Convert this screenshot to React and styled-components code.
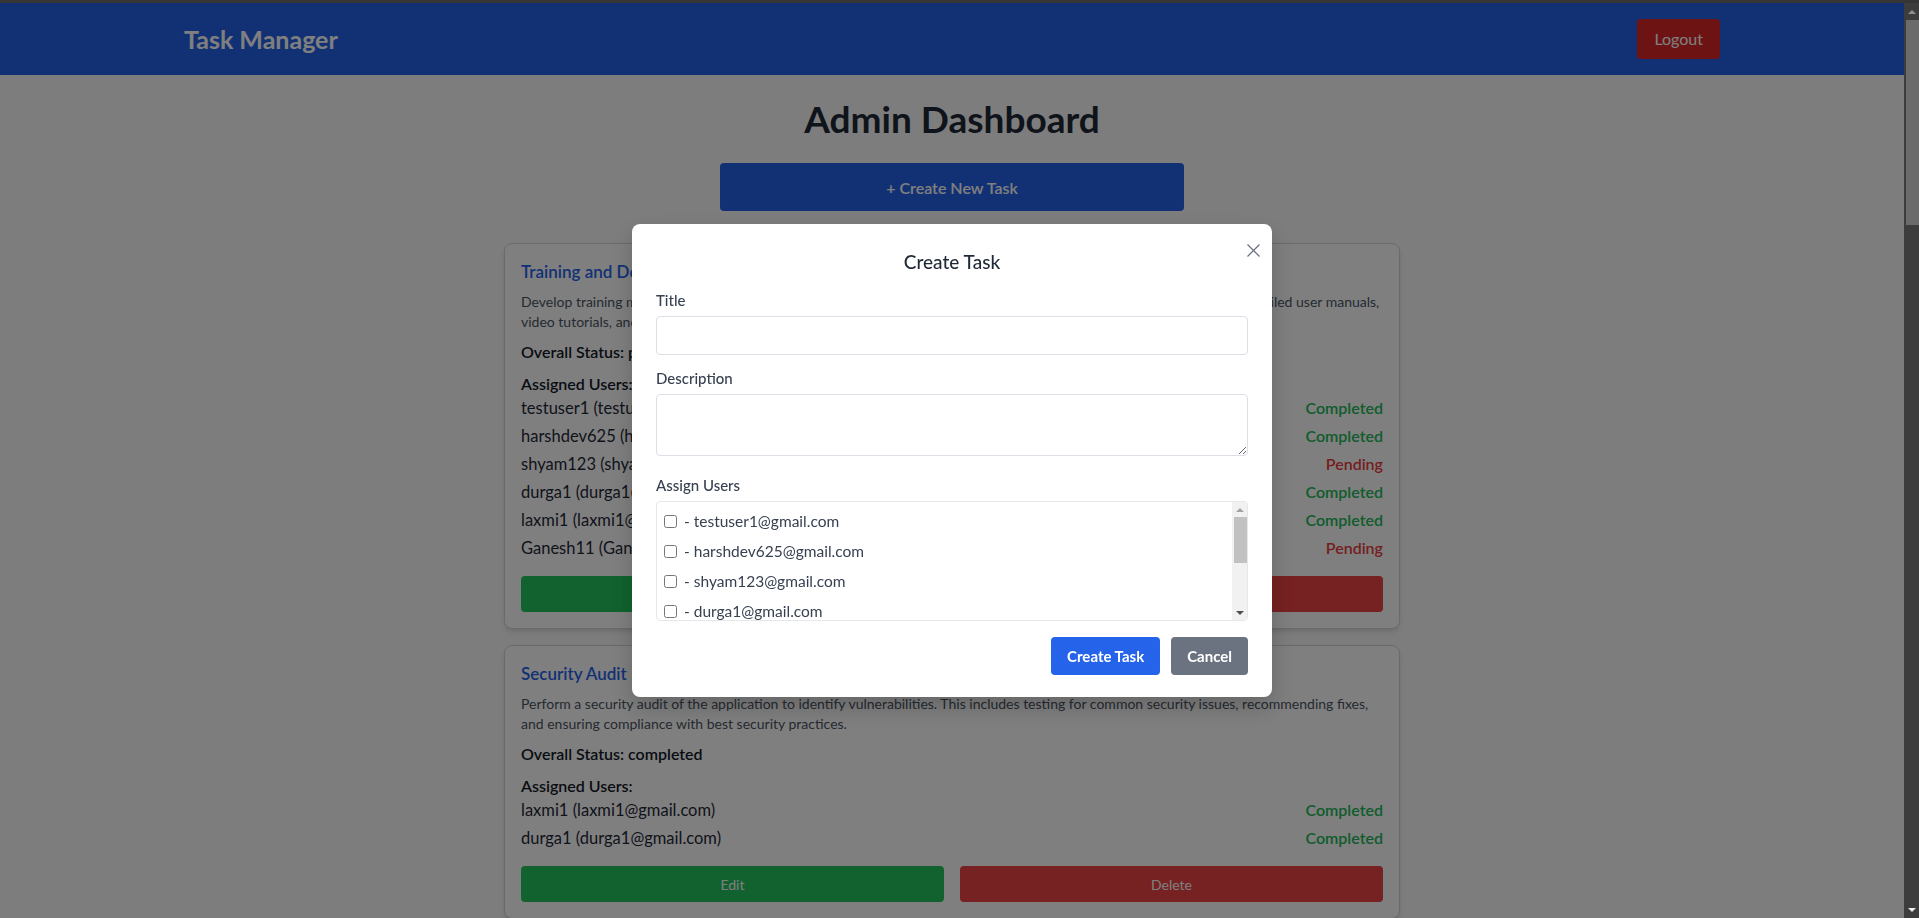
import React, { useState } from "react";
import styled, { createGlobalStyle } from "styled-components";

const GlobalStyle = createGlobalStyle`
  html {
    border-top: 3px solid #363636;
  }
  body {
    margin: 0;
    background: #fafafa;
    font-family: "Lato", "Noto Sans", sans-serif;
    color: #1f2937;
  }
`;

const Page = styled.div`
  margin-right: 15px;
`;

const Navbar = styled.header`
  background: #2563eb;
  padding: 16px 0;
`;

const NavInner = styled.div`
  max-width: 1536px;
  margin: 0 auto;
  display: flex;
  align-items: center;
  justify-content: space-between;
`;

const Brand = styled.h1`
  margin: 0;
  font-size: 25px;
  line-height: 32px;
  font-weight: 700;
  color: #fff;
`;

const LogoutButton = styled.button`
  background: #dc2626;
  color: #fff;
  border: none;
  border-radius: 4px;
  padding: 8px 17px;
  font: inherit;
  font-size: 16px;
  line-height: 24px;
  cursor: pointer;
`;

const Main = styled.main`
  padding: 24px 0;
  display: flex;
  flex-direction: column;
  align-items: center;
`;

const Title = styled.h2`
  margin: 0 0 24px;
  font-size: 37px;
  line-height: 40px;
  font-weight: 700;
  color: #1f2937;
`;

const CreateButton = styled.button`
  width: 464px;
  height: 48px;
  margin-bottom: 32px;
  background: #2563eb;
  color: #fff;
  border: none;
  border-radius: 4px;
  font: inherit;
  font-size: 16px;
  font-weight: 600;
  cursor: pointer;
`;

const TaskList = styled.div`
  width: 100%;
  max-width: 896px;
  display: flex;
  flex-direction: column;
  gap: 16px;
`;

const Card = styled.div`
  background: #fff;
  border: 1px solid #d1d5db;
  border-radius: 8px;
  padding: 16px;
  box-shadow: 0 4px 6px -1px rgba(0, 0, 0, 0.1), 0 2px 4px -2px rgba(0, 0, 0, 0.1);
`;

const CardTitle = styled.h3`
  margin: 0;
  font-size: 17px;
  line-height: 24px;
  font-weight: 600;
  color: #2563eb;
`;

const CardDesc = styled.p`
  margin: 8px 0 0;
  font-size: 14px;
  line-height: 20px;
  color: #4b5563;
`;

const StrongLine = styled.p`
  margin: 8px 0 0;
  font-size: 16px;
  line-height: 24px;
  font-weight: 600;
  color: #111827;
`;

const UserList = styled.ul`
  list-style: none;
  margin: 0;
  padding: 0;
  display: flex;
  flex-direction: column;
  gap: 4px;
`;

const UserRow = styled.li`
  display: flex;
  justify-content: space-between;
  font-size: 16.5px;
  line-height: 24px;
  color: #1f2937;
`;

const Status = styled.span`
  font-weight: 600;
  font-size: 16px;
  color: ${(p) => (p.$done ? "#21b85a" : "#ea3c3c")};
`;

const CardActions = styled.div`
  display: flex;
  gap: 16px;
  margin-top: 16px;
`;

const CardButton = styled.button`
  flex: 1;
  height: 36px;
  border: none;
  border-radius: 4px;
  background: ${(p) => (p.$danger ? "#ef4444" : "#22c55e")};
  color: #fff;
  font: inherit;
  font-size: 14px;
  cursor: pointer;
`;

/* classic scrollbar look, drawn because the page shows it */
const Scrollbar = styled.div`
  width: 15px;
  display: flex;
  flex-direction: column;
  background: ${(p) => (p.$dark ? "#3d3d3d" : "#f1f1f1")};
`;

const PageScrollbar = styled(Scrollbar)`
  position: fixed;
  top: 3px;
  right: 0;
  bottom: 0;
  z-index: 2;
`;

const ScrollButton = styled.div`
  height: ${(p) => p.$h}px;
  flex-shrink: 0;
  display: flex;
  align-items: center;
  justify-content: center;

  &::before {
    content: "";
    border-left: 4px solid transparent;
    border-right: 4px solid transparent;
    ${(p) => (p.$down ? "border-top" : "border-bottom")}: 4px solid ${(p) => p.$color};
  }
`;

const ScrollTrack = styled.div`
  flex: 1;
`;

const ScrollThumb = styled.div`
  height: ${(p) => p.$size}px;
  margin-left: 2px;
  background: ${(p) => (p.$dark ? "#6b6b6b" : "#c1c1c1")};
`;

const Overlay = styled.div`
  position: fixed;
  top: 3px;
  left: 0;
  right: 15px;
  bottom: 0;
  background: rgba(0, 0, 0, 0.5);
  display: flex;
  align-items: center;
  justify-content: center;
`;

const Modal = styled.div`
  position: relative;
  width: 640px;
  box-sizing: border-box;
  background: #fff;
  border-radius: 8px;
  padding: 24px 24px 22px;
  box-shadow: 0 10px 25px rgba(0, 0, 0, 0.2);
`;

const CloseButton = styled.button`
  position: absolute;
  top: 20px;
  right: 12px;
  width: 13px;
  height: 13px;
  padding: 0;
  border: none;
  background: none;
  cursor: pointer;
  display: flex;
`;

const ModalTitle = styled.h2`
  margin: 0 0 12px;
  text-align: center;
  font-size: 19px;
  line-height: 28px;
  font-weight: 500;
  color: #1f2937;
`;

const Field = styled.div`
  margin-bottom: ${(p) => p.$mb}px;
`;

const Label = styled.label`
  display: block;
  margin-bottom: 4px;
  font-size: 15px;
  line-height: 24px;
  font-weight: 500;
  color: #374151;
`;

const TextInput = styled.input`
  display: block;
  width: 100%;
  height: 39px;
  box-sizing: border-box;
  border: 1px solid #dcdfe6;
  border-radius: 4px;
  padding: 8px 12px;
  font: inherit;
  font-size: 14px;
`;

const TextArea = styled.textarea`
  display: block;
  width: 100%;
  height: 62px;
  box-sizing: border-box;
  border: 1px solid #dcdfe6;
  border-radius: 4px;
  padding: 8px 12px;
  font: inherit;
  font-size: 14px;
`;

const UserPicker = styled.div`
  height: 120px;
  box-sizing: border-box;
  border: 1px solid #e5e7eb;
  border-radius: 4px;
  display: flex;
  overflow: hidden;
`;

const PickList = styled.div`
  flex: 1;
  padding: 9px 7px 0;
  overflow: hidden;
`;

const PickRow = styled.label`
  display: flex;
  align-items: center;
  height: 20px;
  margin-bottom: 10px;
  font-size: 15.5px;
  color: #374151;
`;

const Check = styled.input`
  width: 13px;
  height: 13px;
  margin: 0 7px 0 0;
`;

const ModalActions = styled.div`
  display: flex;
  justify-content: flex-end;
  gap: 11px;
  margin-top: 16px;
`;

const ModalButton = styled.button`
  height: 38px;
  padding: 0 16px;
  border: none;
  border-radius: 4px;
  background: ${(p) => (p.$secondary ? "#6b7280" : "#2563eb")};
  color: #fff;
  font: inherit;
  font-size: 15px;
  font-weight: 700;
  cursor: pointer;
`;

const people = [
  ["testuser1", "testuser1@gmail.com"],
  ["harshdev625", "harshdev625@gmail.com"],
  ["shyam123", "shyam123@gmail.com"],
  ["durga1", "durga1@gmail.com"],
  ["laxmi1", "laxmi1@gmail.com"],
  ["Ganesh11", "Ganesh11@gmail.com"],
];

const tasks = [
  {
    title: "Training and Documentation",
    description:
      "Develop training materials and documentation for end users and administrators of the platform. This includes creating detailed user manuals, video tutorials, and an FAQ section to help users get started quickly.",
    status: "pending",
    users: [
      ["testuser1", true],
      ["harshdev625", true],
      ["shyam123", false],
      ["durga1", true],
      ["laxmi1", true],
      ["Ganesh11", false],
    ],
  },
  {
    title: "Security Audit",
    description:
      "Perform a security audit of the application to identify vulnerabilities. This includes testing for common security issues, recommending fixes, and ensuring compliance with best security practices.",
    status: "completed",
    users: [
      ["laxmi1", true],
      ["durga1", true],
    ],
  },
  {
    title: "Performance Optimization",
    description:
      "Analyze application performance and optimize slow database queries, API response times and front-end rendering to improve the overall user experience.",
    status: "pending",
    users: [
      ["harshdev625", true],
      ["shyam123", false],
      ["Ganesh11", false],
    ],
  },
  {
    title: "User Authentication Module",
    description:
      "Implement secure login, registration and password reset flows using JWT tokens, including role based access for admins and regular users.",
    status: "completed",
    users: [
      ["testuser1", true],
      ["laxmi1", true],
      ["durga1", true],
      ["harshdev625", true],
    ],
  },
  {
    title: "Database Migration",
    description:
      "Migrate existing data to the new database schema, write migration scripts and verify data integrity after the migration is complete.",
    status: "pending",
    users: [
      ["shyam123", false],
      ["Ganesh11", true],
      ["testuser1", false],
    ],
  },
];

const emailOf = (name) => people.find((p) => p[0] === name)[1];

const CloseIcon = () => (
  <svg width="13" height="13" viewBox="0 0 13 13" fill="none" stroke="#6b7280" strokeWidth="1.2">
    <line x1="0.5" y1="0.5" x2="12.5" y2="12.5" />
    <line x1="12.5" y1="0.5" x2="0.5" y2="12.5" />
  </svg>
);

const TaskCard = ({ task }) => (
  <Card>
    <CardTitle>{task.title}</CardTitle>
    <CardDesc>{task.description}</CardDesc>
    <StrongLine>Overall Status: {task.status}</StrongLine>
    <StrongLine>Assigned Users:</StrongLine>
    <UserList>
      {task.users.map(([name, done]) => (
        <UserRow key={name}>
          <span>
            {name} ({emailOf(name)})
          </span>
          <Status $done={done}>{done ? "Completed" : "Pending"}</Status>
        </UserRow>
      ))}
    </UserList>
    <CardActions>
      <CardButton>Edit</CardButton>
      <CardButton $danger>Delete</CardButton>
    </CardActions>
  </Card>
);

const App = () => {
  const [open, setOpen] = useState(true);

  return (
    <>
      <GlobalStyle />
      <Page>
        <Navbar>
          <NavInner>
            <Brand>Task Manager</Brand>
            <LogoutButton>Logout</LogoutButton>
          </NavInner>
        </Navbar>
        <Main>
          <Title>Admin Dashboard</Title>
          <CreateButton onClick={() => setOpen(true)}>+ Create New Task</CreateButton>
          <TaskList>
            {tasks.map((t) => (
              <TaskCard key={t.title} task={t} />
            ))}
          </TaskList>
        </Main>
      </Page>

      <PageScrollbar $dark>
        <ScrollButton $h={17} $color="#8f8f8f" />
        <ScrollTrack>
          <ScrollThumb $dark $size={205} />
        </ScrollTrack>
        <ScrollButton $h={17} $down $color="#ececec" />
      </PageScrollbar>

      {open && (
        <Overlay>
          <Modal>
            <CloseButton onClick={() => setOpen(false)}>
              <CloseIcon />
            </CloseButton>
            <ModalTitle>Create Task</ModalTitle>
            <Field $mb={11}>
              <Label>Title</Label>
              <TextInput type="text" />
            </Field>
            <Field $mb={17}>
              <Label>Description</Label>
              <TextArea />
            </Field>
            <Field $mb={0}>
              <Label>Assign Users</Label>
              <UserPicker>
                <PickList>
                  {people.map(([name, email]) => (
                    <PickRow key={name}>
                      <Check type="checkbox" />- {email}
                    </PickRow>
                  ))}
                </PickList>
                <Scrollbar>
                  <ScrollButton $h={15} $color="#a3a3a3" />
                  <ScrollTrack>
                    <ScrollThumb $size={46} />
                  </ScrollTrack>
                  <ScrollButton $h={15} $down $color="#505050" />
                </Scrollbar>
              </UserPicker>
            </Field>
            <ModalActions>
              <ModalButton>Create Task</ModalButton>
              <ModalButton $secondary onClick={() => setOpen(false)}>
                Cancel
              </ModalButton>
            </ModalActions>
          </Modal>
        </Overlay>
      )}
    </>
  );
};

export default App;
